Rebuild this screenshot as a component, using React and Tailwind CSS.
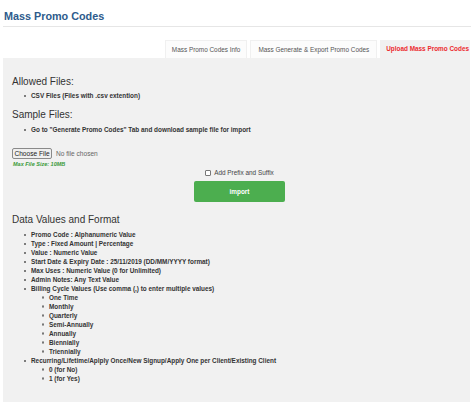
import React from 'react';

const mainItems = [
  'Promo Code : Alphanumeric Value',
  'Type : Fixed Amount | Percentage',
  'Value : Numeric Value',
  'Start Date & Expiry Date : 25/11/2019 (DD/MM/YYYY format)',
  'Max Uses : Numeric Value (0 for Unlimited)',
  'Admin Notes: Any Text Value',
];

const cycles = ['One Time', 'Monthly', 'Quarterly', 'Semi-Annually', 'Annually', 'Biennially', 'Triennially'];

const Item = ({ children }) => (
  <div className="flex items-center h-[9px] leading-[9px]">
    <span className="w-[19px] flex justify-end pr-[5px]">
      <span className="w-[2px] h-[2px] rounded-full bg-[#555]"></span>
    </span>
    <span>{children}</span>
  </div>
);

const SubItem = ({ children }) => (
  <div className="flex items-center h-[9px] leading-[9px]">
    <span className="w-[37px] flex justify-end pr-[5px]">
      <span className="w-[2.5px] h-[2.5px] rounded-full border-[0.6px] border-[#777]"></span>
    </span>
    <span>{children}</span>
  </div>
);

export default function App() {
  return (
    <div className="w-[474px] h-[407px] bg-white font-['Liberation_Sans',Arial,sans-serif] text-[#333] overflow-hidden">
      <div className="mx-[3px] pt-[10px] pb-[3px] border-b border-[#e6e6e6]">
        <h1 className="text-[10.8px] leading-[13px] font-bold text-[#2e5b8c] pl-[1px]">Mass Promo Codes</h1>
      </div>

      <div className="flex justify-end mt-[13px] w-[470px] gap-[3px] text-[6.4px] leading-[18px]">
        <div className="h-[18px] px-[6px] bg-[#fcfcfc] border border-b-0 border-[#f0f0f0] text-[#555]">Mass Promo Codes Info</div>
        <div className="h-[18px] px-[7px] bg-[#fcfcfc] border border-b-0 border-[#f0f0f0] text-[#555]">Mass Generate &amp; Export Promo Codes</div>
        <div className="h-[18px] pl-[6px] pr-[1px] bg-[#f1f1f1] font-bold text-[#ec2a2f]">Upload Mass Promo Codes</div>
      </div>

      <div className="ml-[3px] w-[467px] h-[344px] bg-[#f1f1f1] pt-[18px] pl-[9px] text-[6.4px]">
        <h2 className="text-[10px] leading-[12px]">Allowed Files:</h2>
        <div className="mt-[3px] font-bold">
          <Item>CSV Files (Files with .csv extention)</Item>
        </div>

        <h2 className="mt-[9px] text-[10px] leading-[12px]">Sample Files:</h2>
        <div className="mt-[4px] font-bold">
          <Item>Go to "Generate Promo Codes" Tab and download sample file for import</Item>
        </div>

        <div className="mt-[14px] flex items-center gap-[4px]">
          <div className="h-[11px] w-[40px] border border-[#8a8a8a] rounded-[2px] bg-[#efefef] flex items-center justify-center text-[6.6px] text-[#222]">Choose File</div>
          <span className="text-[6.6px] text-[#666]">No file chosen</span>
        </div>
        <div className="mt-[2px] pl-[1px] text-[5.5px] leading-[6px] italic font-bold text-[#3a9a3a]">Max File Size: 10MB</div>

        <div className="flex flex-col items-center pl-[6px] pr-[9px]">
          <label className="mt-[2px] h-[8px] flex items-center gap-[3px] text-[#444]">
            <span className="w-[6px] h-[6px] border-[0.5px] border-[#777] rounded-[1px] bg-white"></span>
            <span>Add Prefix and Suffix</span>
          </label>
          <button className="mt-[4px] w-[91px] h-[21px] rounded-[2px] bg-[#4cae4f] text-white font-bold text-[6.4px]">import</button>
        </div>

        <h2 className="mt-[12px] text-[10px] leading-[12px]">Data Values and Format</h2>
        <div className="mt-[4px] font-bold">
          {mainItems.map((t) => (
            <Item key={t}>{t}</Item>
          ))}
          <Item>Billing Cycle Values (Use comma (,) to enter multiple values)</Item>
          {cycles.map((c) => (
            <SubItem key={c}>{c}</SubItem>
          ))}
          <Item>Recurring/Lifetime/Aplply Once/New Signup/Apply One per Client/Existing Client</Item>
          <SubItem>0 (for No)</SubItem>
          <SubItem>1 (for Yes)</SubItem>
        </div>
      </div>
    </div>
  );
}
